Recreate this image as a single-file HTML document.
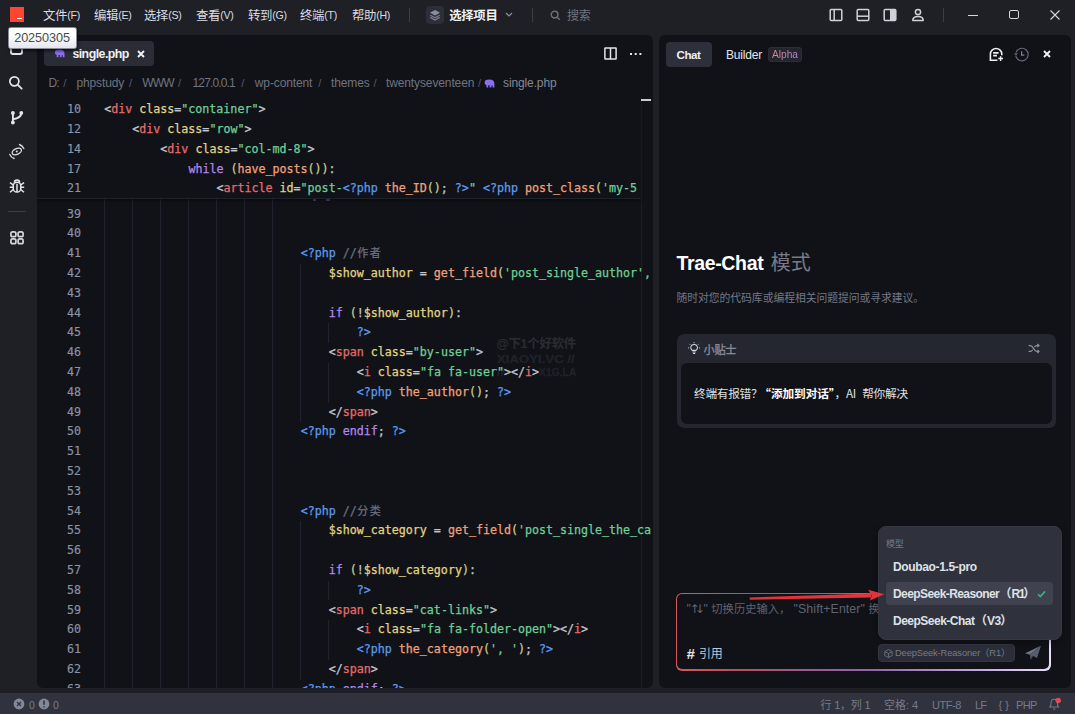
<!DOCTYPE html>
<html lang="zh-CN">
<head>
<meta charset="utf-8">
<title>Trae</title>
<style>
*{box-sizing:border-box;margin:0;padding:0}
html,body{width:1075px;height:714px;overflow:hidden;background:#1f2026}
body{position:relative;font-family:"Liberation Sans","Noto Sans CJK SC",sans-serif;color:#d5d8e0;font-size:12px}
.abs{position:absolute}
svg{position:absolute;overflow:visible}
/* title bar */
.menu{position:absolute;top:7.5px;height:16px;line-height:16px;font-size:12.4px;color:#d9dce3;white-space:nowrap;letter-spacing:-0.3px}
.menu small{font-size:10.6px;letter-spacing:-0.25px;position:relative;top:-0.4px}
.vsep{position:absolute;width:1px;background:#3a3c47}
/* panels */
.panel{position:absolute;background:#111217;border-radius:6px;overflow:hidden}
/* editor */
.tab{position:absolute;left:44px;top:41.3px;width:109.5px;height:24.4px;background:#2a2c36;border-radius:4px}
.crumb{position:absolute;top:75.5px;height:14px;line-height:14px;font-size:12px;color:#6f7380;white-space:nowrap;letter-spacing:-0.12px}
.sl{color:#575a66;font-size:11px}
.ln,.cl{position:absolute;font-family:"DejaVu Sans Mono","Liberation Mono","Noto Sans CJK SC",monospace;font-size:11.7px;height:19.79px;line-height:19.79px;white-space:pre;letter-spacing:-0.0280px}
.ln{left:37px;width:44px;text-align:right;color:#8d93a3}
.cl{color:#c3c7d1;-webkit-text-stroke:0.25px}
.ln{-webkit-text-stroke:0.15px}
.cj{font-size:11px;letter-spacing:1.3px;margin-left:0.6px}
.g{position:absolute;width:1px;background:#20232e}
.wm2{-webkit-text-stroke:0.4px;font-size:11px;font-weight:bold;color:#20222a;line-height:12px;white-space:nowrap;transform:scaleX(1.2);transform-origin:0 0}
.ph .la{font-size:12.3px}
.ph .ar{font-family:"DejaVu Sans",sans-serif;font-size:12px;letter-spacing:-4.6px;margin:0 3.2px 0 -1.6px;position:relative;top:-0.5px}
.fp{margin-left:-0.6px}
.fp.l{margin-left:0.4px;margin-right:0.6px}
.p{color:#c3c7d1}
.t{color:#e66c6c}
.a{color:#e0d585}
.s{color:#6fcf97}
.b{color:#5b9cf0}
.k{color:#b088f0}
.f{color:#f0a27c}
.c{color:#6c7080}
.y{color:#c9cf8c}
.w{color:#c3c7d1}
/* chat */
.muted{color:#747886}
.st{position:absolute;top:698px;height:14px;line-height:14px;font-size:11px;color:#777b89;white-space:nowrap}
.mi{position:absolute;left:893px;height:16px;line-height:16px;font-size:12px;font-weight:bold;color:#dfe1e8;white-space:nowrap;letter-spacing:-0.35px}
</style>
</head>
<body>

<!-- ================= TITLE BAR ================= -->
<div class="abs" style="left:9.7px;top:7.4px;width:14.4px;height:14.7px;background:#fd4531"></div>
<div class="abs" style="left:16.8px;top:17.7px;width:5.2px;height:1.8px;background:#fff"></div>

<div class="menu" style="left:43px">文件<small>(F)</small></div>
<div class="menu" style="left:94px">编辑<small>(E)</small></div>
<div class="menu" style="left:144px">选择<small>(S)</small></div>
<div class="menu" style="left:196px">查看<small>(V)</small></div>
<div class="menu" style="left:248px">转到<small>(G)</small></div>
<div class="menu" style="left:300px">终端<small>(T)</small></div>
<div class="menu" style="left:352px">帮助<small>(H)</small></div>
<div class="vsep" style="left:409px;top:8px;height:14px"></div>

<div class="abs" style="left:426px;top:6px;width:18px;height:18px;border-radius:4px;background:#2c2e39"></div>
<svg style="left:429px;top:9px" width="12" height="12" viewBox="0 0 12 12"><path d="M6 1 L11 3.8 L6 6.6 L1 3.8 Z" fill="#8a8e9b"/><path d="M1.3 6.2 L6 8.8 L10.7 6.2 M1.3 8.4 L6 11 L10.7 8.4" fill="none" stroke="#7a7e8b" stroke-width="1.3"/></svg>
<div class="menu" style="left:449.2px;font-weight:bold;color:#f0f1f4;letter-spacing:-0.3px">选择项目</div>
<svg style="left:505px;top:12px" width="8" height="6" viewBox="0 0 8 6"><path d="M1 1 L4 4 L7 1" fill="none" stroke="#8b8f9c" stroke-width="1.2"/></svg>
<div class="vsep" style="left:531.6px;top:8px;height:14px"></div>
<svg style="left:550px;top:10px" width="11" height="11" viewBox="0 0 11 11"><circle cx="4.6" cy="4.6" r="3.4" fill="none" stroke="#6f7380" stroke-width="1.3"/><path d="M7.2 7.2 L9.8 9.8" stroke="#6f7380" stroke-width="1.3"/></svg>
<div class="menu" style="left:567px;color:#6f7380;font-size:12px">搜索</div>

<!-- window / layout icons -->
<svg style="left:828.7px;top:8px" width="14" height="14" viewBox="0 0 14 14"><rect x="1.2" y="1.6" width="11.6" height="10.8" rx="1" fill="none" stroke="#cfd2da" stroke-width="1.5"/><path d="M5.2 1.6 V12.4" stroke="#cfd2da" stroke-width="1.5"/></svg>
<svg style="left:855.7px;top:8px" width="14" height="14" viewBox="0 0 14 14"><rect x="1.2" y="1.6" width="11.6" height="10.8" rx="1" fill="none" stroke="#cfd2da" stroke-width="1.5"/><path d="M1.2 8.2 H12.8" stroke="#cfd2da" stroke-width="1.5"/></svg>
<svg style="left:882.7px;top:8px" width="14" height="14" viewBox="0 0 14 14"><rect x="1.2" y="1.6" width="11.6" height="10.8" rx="1" fill="none" stroke="#cfd2da" stroke-width="1.5"/><rect x="7" y="1.6" width="5.8" height="10.8" fill="#cfd2da"/></svg>
<svg style="left:910.7px;top:8px" width="14" height="14" viewBox="0 0 14 14"><circle cx="7" cy="4" r="2.6" fill="none" stroke="#cfd2da" stroke-width="1.5"/><path d="M1.8 12.4 C1.8 9.6 4 8.6 7 8.6 C10 8.6 12.2 9.6 12.2 12.4 Z" fill="none" stroke="#cfd2da" stroke-width="1.5" stroke-linejoin="round"/></svg>
<div class="vsep" style="left:943px;top:8px;height:14px"></div>
<div class="abs" style="left:967.6px;top:15px;width:10.2px;height:1px;background:#d5d8e0"></div>
<div class="abs" style="left:1009.2px;top:10px;width:9.4px;height:9.4px;border:1.1px solid #d5d8e0;border-radius:2px"></div>
<svg style="left:1050.4px;top:10px" width="10" height="10" viewBox="0 0 10 10"><path d="M0.5 0.5 L9.5 9.5 M9.5 0.5 L0.5 9.5" stroke="#d5d8e0" stroke-width="1.1"/></svg>

<!-- ================= ACTIVITY BAR ================= -->
<div class="abs" style="left:10px;top:41px;width:13.2px;height:14.2px;border:2px solid #e3e5ea;border-radius:3px"></div>
<svg style="left:8.4px;top:75.2px" width="15.4" height="15.4" viewBox="0 0 16 16"><circle cx="6.6" cy="6.6" r="4.7" fill="none" stroke="#e3e5ea" stroke-width="1.8"/><path d="M10.2 10.2 L14.2 14.2" stroke="#e3e5ea" stroke-width="1.9" stroke-linecap="round"/></svg>
<svg style="left:0px;top:100px" width="37" height="100" viewBox="0 0 37 100">
<g fill="none" stroke="#e3e5ea">
<!-- branch -->
<path d="M12.9 13 V22.4 M12.9 19.3 C17 18.6 21.3 17.6 21.3 13" stroke-width="1.9"/>
<circle cx="12.9" cy="12.9" r="1.9" fill="#e3e5ea" stroke="none"/><circle cx="12.9" cy="22.5" r="1.9" fill="#e3e5ea" stroke="none"/><circle cx="21.3" cy="12.9" r="1.9" fill="#e3e5ea" stroke="none"/>
<!-- eye -->
<g transform="translate(16.8 51.5)" stroke="#d9dce3" stroke-width="1.35" stroke-linecap="round">
<ellipse cx="0" cy="0" rx="4.9" ry="2.9" transform="rotate(-24)"/>
<circle cx="0" cy="0" r="1" fill="#d9dce3" stroke="none"/>
<path d="M2.7 -7 A7.5 7.5 0 0 1 7 -2.9"/>
<path d="M-2.7 7 A7.5 7.5 0 0 1 -7 2.9"/>
</g>
<!-- bug -->
<g transform="translate(9 77.5) scale(1 0.94)" stroke-width="1.5">
<rect x="4.3" y="5" width="7.4" height="10.4" rx="3.5"/>
<path d="M5.4 5.2 C5.4 1.8 10.6 1.8 10.6 5.2"/>
<path d="M8 6.6 V15.4"/>
<path d="M4.3 8 L1 5.4 M4.3 10.4 H0.8 M4.3 12.8 L1 15.6 M11.7 8 L15 5.4 M11.7 10.4 H15.2 M11.7 12.8 L15 15.6"/>
</g>
</g></svg>
<div class="abs" style="left:8px;top:211px;width:18px;height:1px;background:#3a3c47"></div>
<svg style="left:10px;top:230.7px" width="14" height="13.6" viewBox="0 0 14 13.6"><g fill="none" stroke="#d3d6de" stroke-width="1.7"><rect x="0.9" y="0.9" width="5" height="4.8" rx="1.8"/><rect x="8.1" y="0.9" width="5" height="4.8" rx="1.8"/><rect x="0.9" y="7.9" width="5" height="4.8" rx="1.8"/><rect x="8.1" y="7.9" width="5" height="4.8" rx="1.8"/></g></svg>

<!-- ================= EDITOR PANEL ================= -->
<div class="panel" style="left:37px;top:34.5px;width:616px;height:653px"></div>
<div class="tab"></div>
<svg style="left:54.3px;top:49.2px" width="11.4" height="8.8" viewBox="0 0 11 9"><path d="M0.6 3.4 C0.6 1 2.6 0.4 5.2 0.4 C8.6 0.4 10.4 1.6 10.4 4.4 V8.4 H8.6 V6.4 H7.4 V8.4 H5.6 V6.2 H4.2 V8.4 H2.4 V6 C1.2 5.6 0.6 4.8 0.6 3.4 Z" fill="#8b6ff0"/></svg>
<div class="abs" style="left:72.4px;top:46px;height:16px;line-height:16px;font-size:12.4px;font-weight:bold;color:#f0f1f4;letter-spacing:-0.55px">single.php</div>
<svg style="left:136.5px;top:49.5px" width="8" height="8" viewBox="0 0 8 8"><path d="M1 1 L7 7 M7 1 L1 7" stroke="#f0f1f4" stroke-width="1.9"/></svg>
<svg style="left:604.3px;top:47px" width="13" height="13" viewBox="0 0 13 13"><rect x="0.9" y="0.9" width="11.2" height="11.2" rx="0.4" fill="none" stroke="#e3e5ea" stroke-width="1.5"/><path d="M6.5 0.9 V12.1" stroke="#e3e5ea" stroke-width="1.5"/></svg>
<div class="abs" style="left:630.4px;top:52.6px;width:2.1px;height:2.1px;background:#e3e5ea;box-shadow:4.7px 0 #e3e5ea,9.4px 0 #e3e5ea"></div>

<!-- breadcrumbs -->
<div class="crumb" style="left:48.6px;letter-spacing:-0.9px">D:</div><div class="crumb sl" style="left:63.3px">/</div>
<div class="crumb" style="left:76.4px">phpstudy</div><div class="crumb sl" style="left:129.0px">/</div>
<div class="crumb" style="left:142.2px;letter-spacing:-0.75px">WWW</div><div class="crumb sl" style="left:178.0px">/</div>
<div class="crumb" style="left:192.5px;letter-spacing:-0.85px">127.0.0.1</div><div class="crumb sl" style="left:241.3px">/</div>
<div class="crumb" style="left:254.8px">wp-content</div><div class="crumb sl" style="left:318.3px">/</div>
<div class="crumb" style="left:331.0px">themes</div><div class="crumb sl" style="left:373.4px">/</div>
<div class="crumb" style="left:386.0px">twentyseventeen</div><div class="crumb sl" style="left:478.0px">/</div>
<svg style="left:484px;top:79px" width="11" height="9" viewBox="0 0 11 9"><path d="M0.6 3.4 C0.6 1 2.6 0.4 5.2 0.4 C8.6 0.4 10.4 1.6 10.4 4.4 V8.4 H8.6 V6.4 H7.4 V8.4 H5.6 V6.2 H4.2 V8.4 H2.4 V6 C1.2 5.6 0.6 4.8 0.6 3.4 Z" fill="#8b6ff0"/></svg>
<div class="crumb" style="left:503px;color:#858996">single.php</div>

<!-- code area -->
<div class="abs" style="left:37px;top:98.2px;width:604px;height:1.6px;background:#1a1d27"></div>
<div class="abs" style="left:37px;top:97px;width:616px;height:591px;overflow:hidden;border-radius:0 0 6px 6px">
 <div class="abs" style="left:-37px;top:-97px;width:1075px;height:714px">
  <!-- watermark -->
  <div class="abs" style="left:496.5px;top:335.5px;font-size:12.4px;font-weight:bold;color:#2a2c35;line-height:16px;white-space:nowrap;letter-spacing:-0.2px">@下1个好软件</div>
  <div class="abs wm2" style="left:496.5px;top:353px">XIAOYI.VC //</div>
  <div class="abs wm2" style="left:496.5px;top:365.7px">//</div>
  <div class="abs wm2" style="left:539px;top:365.7px;transform:scaleX(.94)">X1G.LA</div>
  <div class="abs" style="left:641px;top:97px;width:1px;height:591px;background:#1c1d24"></div>
<i class="g" style="left:103.7px;top:199px;height:489px"></i>
<i class="g" style="left:131.8px;top:199px;height:489px"></i>
<i class="g" style="left:159.8px;top:199px;height:489px"></i>
<i class="g" style="left:187.9px;top:199px;height:489px"></i>
<i class="g" style="left:216.0px;top:199px;height:489px"></i>
<i class="g" style="left:244.0px;top:199px;height:489px"></i>
<i class="g" style="left:272.1px;top:199px;height:489px"></i>
<i class="g" style="left:300.1px;top:264.1px;height:158.3px"></i>
<i class="g" style="left:328.2px;top:323.4px;height:19.8px"></i>
<i class="g" style="left:328.2px;top:363.0px;height:39.6px"></i>
<i class="g" style="left:300.1px;top:521.3px;height:158.3px"></i>
<i class="g" style="left:328.2px;top:580.7px;height:19.8px"></i>
<i class="g" style="left:328.2px;top:620.3px;height:39.6px"></i>
<div class="ln" style="top:204.70px">39</div>
<div class="ln" style="top:224.49px">40</div>
<div class="ln" style="top:244.28px">41</div>
<div class="cl" style="top:244.28px;left:300.65px"><span class="b">&lt;?php</span><span class="w"> </span><span class="c">//</span><span class="c cj">作者</span></div>
<div class="ln" style="top:264.07px">42</div>
<div class="cl" style="top:264.07px;left:328.71px"><span class="a">$show_author</span><span class="w"> </span><span class="p">=</span><span class="w"> </span><span class="f">get_field</span><span class="y">(</span><span class="s">'post_single_author',</span></div>
<div class="ln" style="top:283.86px">43</div>
<div class="ln" style="top:303.65px">44</div>
<div class="cl" style="top:303.65px;left:328.71px"><span class="k">if</span><span class="w"> </span><span class="y">(</span><span class="p">!</span><span class="a">$show_author</span><span class="y">)</span><span class="p">:</span></div>
<div class="ln" style="top:323.44px">45</div>
<div class="cl" style="top:323.44px;left:356.78px"><span class="b">?&gt;</span></div>
<div class="ln" style="top:343.23px">46</div>
<div class="cl" style="top:343.23px;left:328.71px"><span class="p">&lt;</span><span class="t">span</span><span class="w"> </span><span class="a">class</span><span class="p">=</span><span class="s">"by-user"</span><span class="p">&gt;</span></div>
<div class="ln" style="top:363.02px">47</div>
<div class="cl" style="top:363.02px;left:356.78px"><span class="p">&lt;</span><span class="t">i</span><span class="w"> </span><span class="a">class</span><span class="p">=</span><span class="s">"fa fa-user"</span><span class="p">&gt;</span><span class="p">&lt;/</span><span class="t">i</span><span class="p">&gt;</span></div>
<div class="ln" style="top:382.81px">48</div>
<div class="cl" style="top:382.81px;left:356.78px"><span class="b">&lt;?php</span><span class="w"> </span><span class="f">the_author</span><span class="y">(</span><span class="y">)</span><span class="p">;</span><span class="w"> </span><span class="b">?&gt;</span></div>
<div class="ln" style="top:402.60px">49</div>
<div class="cl" style="top:402.60px;left:328.71px"><span class="p">&lt;/</span><span class="t">span</span><span class="p">&gt;</span></div>
<div class="ln" style="top:422.39px">50</div>
<div class="cl" style="top:422.39px;left:300.65px"><span class="b">&lt;?php</span><span class="w"> </span><span class="k">endif</span><span class="p">;</span><span class="w"> </span><span class="b">?&gt;</span></div>
<div class="ln" style="top:442.18px">51</div>
<div class="ln" style="top:461.97px">52</div>
<div class="ln" style="top:481.76px">53</div>
<div class="ln" style="top:501.55px">54</div>
<div class="cl" style="top:501.55px;left:300.65px"><span class="b">&lt;?php</span><span class="w"> </span><span class="c">//</span><span class="c cj">分类</span></div>
<div class="ln" style="top:521.34px">55</div>
<div class="cl" style="top:521.34px;left:328.71px"><span class="a">$show_category</span><span class="w"> </span><span class="p">=</span><span class="w"> </span><span class="f">get_field</span><span class="y">(</span><span class="s">'post_single_the_ca</span></div>
<div class="ln" style="top:541.13px">56</div>
<div class="ln" style="top:560.92px">57</div>
<div class="cl" style="top:560.92px;left:328.71px"><span class="k">if</span><span class="w"> </span><span class="y">(</span><span class="p">!</span><span class="a">$show_category</span><span class="y">)</span><span class="p">:</span></div>
<div class="ln" style="top:580.71px">58</div>
<div class="cl" style="top:580.71px;left:356.78px"><span class="b">?&gt;</span></div>
<div class="ln" style="top:600.50px">59</div>
<div class="cl" style="top:600.50px;left:328.71px"><span class="p">&lt;</span><span class="t">span</span><span class="w"> </span><span class="a">class</span><span class="p">=</span><span class="s">"cat-links"</span><span class="p">&gt;</span></div>
<div class="ln" style="top:620.29px">60</div>
<div class="cl" style="top:620.29px;left:356.78px"><span class="p">&lt;</span><span class="t">i</span><span class="w"> </span><span class="a">class</span><span class="p">=</span><span class="s">"fa fa-folder-open"</span><span class="p">&gt;</span><span class="p">&lt;/</span><span class="t">i</span><span class="p">&gt;</span></div>
<div class="ln" style="top:640.08px">61</div>
<div class="cl" style="top:640.08px;left:356.78px"><span class="b">&lt;?php</span><span class="w"> </span><span class="f">the_category</span><span class="y">(</span><span class="s">', '</span><span class="y">)</span><span class="p">;</span><span class="w"> </span><span class="b">?&gt;</span></div>
<div class="ln" style="top:659.87px">62</div>
<div class="cl" style="top:659.87px;left:328.71px"><span class="p">&lt;/</span><span class="t">span</span><span class="p">&gt;</span></div>
<div class="ln" style="top:679.66px">63</div>
<div class="cl" style="top:679.66px;left:300.65px"><span class="b">&lt;?php</span><span class="w"> </span><span class="k">endif</span><span class="p">;</span><span class="w"> </span><span class="b">?&gt;</span></div>
  <!-- sliver of clipped line above 39 -->
  <div class="abs" style="left:313px;top:199px;width:3px;height:2px;background:#5b9cf0;opacity:.4"></div>
  <div class="abs" style="left:326px;top:199px;width:4px;height:2px;background:#5b9cf0;opacity:.4"></div>
  <!-- sticky scroll -->
  <div class="abs" style="left:37px;top:97px;width:604px;height:101.5px;background:#111217;border-bottom:1px solid #1f212a;box-shadow:0 2px 3px rgba(0,0,0,.35)"></div>
<div class="ln" style="top:100.20px">10</div>
<div class="cl" style="top:100.20px;left:104.20px"><span class="p">&lt;</span><span class="t">div</span><span class="w"> </span><span class="a">class</span><span class="p">=</span><span class="s">"container"</span><span class="p">&gt;</span></div>
<div class="ln" style="top:119.99px">12</div>
<div class="cl" style="top:119.99px;left:132.26px"><span class="p">&lt;</span><span class="t">div</span><span class="w"> </span><span class="a">class</span><span class="p">=</span><span class="s">"row"</span><span class="p">&gt;</span></div>
<div class="ln" style="top:139.78px">14</div>
<div class="cl" style="top:139.78px;left:160.33px"><span class="p">&lt;</span><span class="t">div</span><span class="w"> </span><span class="a">class</span><span class="p">=</span><span class="s">"col-md-8"</span><span class="p">&gt;</span></div>
<div class="ln" style="top:159.57px">17</div>
<div class="cl" style="top:159.57px;left:188.39px"><span class="k">while</span><span class="w"> </span><span class="y">(</span><span class="f">have_posts</span><span class="y">())</span><span class="p">:</span></div>
<div class="ln" style="top:179.36px">21</div>
<div class="cl" style="top:179.36px;left:216.46px"><span class="p">&lt;</span><span class="t">article</span><span class="w"> </span><span class="a">id</span><span class="p">=</span><span class="s">"post-</span><span class="b">&lt;?php</span><span class="w"> </span><span class="f">the_ID</span><span class="y">()</span><span class="p">;</span><span class="w"> </span><span class="b">?&gt;</span><span class="s">"</span><span class="w"> </span><span class="b">&lt;?php</span><span class="w"> </span><span class="f">post_class</span><span class="y">(</span><span class="s">'my-5</span></div>
  <!-- scrollbar / minimap edge -->
  <div class="abs" style="left:641px;top:99px;width:10px;height:2px;background:#c9ccd6"></div>
 </div>
</div>

<!-- ================= CHAT PANEL ================= -->
<div class="panel" style="left:658.5px;top:34.5px;width:412.3px;height:653px"></div>
<div class="abs" style="left:666px;top:42px;width:46px;height:25px;border-radius:4px;background:#2d2f3a"></div>
<div class="abs" style="left:676.5px;top:46.5px;height:16px;line-height:16px;font-size:11.6px;font-weight:bold;color:#eceef2;letter-spacing:-0.45px">Chat</div>
<div class="abs" style="left:726px;top:46.5px;height:16px;line-height:16px;font-size:12px;color:#e3e5ea;letter-spacing:-0.2px">Builder</div>
<div class="abs" style="left:768px;top:47px;width:34px;height:15px;border-radius:3px;background:#25252f;border:1px solid #2d2d39;font-size:10.2px;line-height:13px;text-align:center"><span style="background:linear-gradient(90deg,#e0848c,#b48bd6);-webkit-background-clip:text;background-clip:text;color:transparent">Alpha</span></div>
<!-- chat header icons -->
<svg style="left:988.6px;top:47px" width="15" height="15" viewBox="0 0 15 15"><path d="M8.4 13.2 H1.4 V7.2 A5.7 5.7 0 0 1 12.8 7.2 V8.2" fill="none" stroke="#eceef2" stroke-width="1.6"/><path d="M4.2 5.8 H9.6 M4.2 8.6 H8" stroke="#eceef2" stroke-width="1.7"/><path d="M11.6 9.2 V14 M9.2 11.6 H14" stroke="#eceef2" stroke-width="1.5"/></svg>
<svg style="left:1014px;top:47px" width="16" height="16" viewBox="0 0 16 16"><path d="M2 5.4 A6.3 6.3 0 1 1 1.7 8.6" fill="none" stroke="#676b79" stroke-width="1.15"/><path d="M0.6 6.2 L2 7.6 L3.4 6.2" fill="none" stroke="#676b79" stroke-width="1.1"/><path d="M7.6 4.2 V8.2 H10.4" fill="none" stroke="#7d8190" stroke-width="1.2"/></svg>
<svg style="left:1042.6px;top:50.3px" width="8" height="8" viewBox="0 0 8 8"><path d="M1 1 L7 7 M7 1 L1 7" stroke="#f0f1f4" stroke-width="1.9"/></svg>

<div class="abs" style="left:676.5px;top:249px;height:28px;line-height:28px;font-size:19.5px;font-weight:bold;color:#fff;white-space:nowrap;letter-spacing:-0.35px">Trae-Chat <span style="font-weight:normal;color:#777b89;font-size:20px;letter-spacing:0;margin-left:2.3px">模式</span></div>
<div class="abs muted" style="left:676.5px;top:290px;height:16px;line-height:16px;font-size:10.8px;white-space:nowrap;letter-spacing:-0.03px">随时对您的代码库或编程相关问题提问或寻求建议。</div>

<!-- tips card -->
<div class="abs" style="left:677px;top:333.8px;width:379px;height:94.2px;border-radius:7px;background:#252730"></div>
<svg style="left:688px;top:341.6px" width="12.2" height="12.2" viewBox="0 0 14 14"><g fill="none" stroke="#d5d8e0" stroke-width="1.2"><path d="M4.8 9.6 C3.6 8.8 3.2 7.8 3.2 6.6 A3.8 3.8 0 0 1 10.8 6.6 C10.8 7.8 10.4 8.8 9.2 9.6 Z"/><path d="M5.2 11.6 H8.8 M5.8 13.2 H8.2"/><path d="M7 0.2 V1.4 M1.6 2.2 L2.4 3 M12.4 2.2 L11.6 3 M0.2 6.8 H1.4 M12.6 6.8 H13.8" stroke-width="1.1"/></g></svg>
<div class="abs" style="left:703.6px;top:341.8px;height:16px;line-height:16px;font-size:11.2px;color:#8b8f9c;letter-spacing:-0.3px;-webkit-text-stroke:0.3px">小贴士</div>
<svg style="left:1028px;top:343px" width="12" height="11" viewBox="0 0 12 11"><g fill="none" stroke="#8b8f9c" stroke-width="1.2"><path d="M0.6 2.6 H2.6 C5 2.6 6 8.4 8.6 8.4 H10.8"/><path d="M0.6 8.4 H2.6 C3.6 8.4 4.2 7.6 4.7 6.8 M6.4 4.2 C7 3.2 7.6 2.6 8.6 2.6 H10.8"/><path d="M9.4 1 L11 2.6 L9.4 4.2 M9.4 6.8 L11 8.4 L9.4 10"/></g></svg>
<div class="abs" style="left:681px;top:363px;width:371px;height:61px;border-radius:6px;background:#111217"></div>
<div class="abs" style="left:694px;top:384.5px;height:16px;line-height:16px;font-size:11.7px;color:#dfe1e7;white-space:nowrap;letter-spacing:-0.3px;word-spacing:4px;font-family:'Noto Sans CJK SC','Liberation Sans',sans-serif">终端有报错？<b style="color:#fff;letter-spacing:-0.1px;margin-left:-3px">“添加到对话”</b>，AI 帮你解决</div>

<!-- input box -->
<div class="abs" style="left:676px;top:593px;width:374.5px;height:77.5px;border-radius:6px;background:linear-gradient(97deg,#d8595f 0%,#bb505b 17%,#a0568a 34%,#9266ae 54%,#c4a8e6 82%,#e9defa 100%)"></div>
<div class="abs" style="left:677.1px;top:594.1px;width:372.3px;height:75.3px;border-radius:5px;background:#111217"></div>
<div class="abs ph" style="left:686.6px;top:601px;width:300px;overflow:hidden;height:17px;line-height:17px;font-size:11.3px;color:#5f6371;white-space:nowrap"><span class="la">"</span><span class="ar">↑↓</span><span class="la">" </span>切换历史输入，<span class="la" style="margin-left:3.2px;letter-spacing:0.12px">"Shift+Enter" </span>换行</div>
<div class="abs" style="left:686.8px;top:645.5px;height:16px;line-height:16px;font-size:12px;color:#c3c7d1;white-space:nowrap"><b style="font-size:14.5px;color:#e3e5ea;position:relative;top:0.5px">#</b><span style="margin-left:4px;letter-spacing:-0.2px;position:relative;top:-0.3px">引用</span></div>
<div class="abs" style="left:878px;top:644px;width:137px;height:18px;border-radius:4px;background:#2b2d38;border:1px solid #343644"></div>
<svg style="left:884px;top:648.5px" width="9" height="9" viewBox="0 0 9 9"><path d="M4.5 0.6 L8.2 2.6 V6.6 L4.5 8.5 L0.8 6.6 V2.6 Z M0.8 2.6 L4.5 4.6 L8.2 2.6 M4.5 4.6 V8.5" fill="none" stroke="#6b6f7d" stroke-width="0.9"/></svg>
<div class="abs" style="left:895px;top:646px;height:14px;line-height:14px;font-size:9.3px;color:#777b89;white-space:nowrap;letter-spacing:-0.1px">DeepSeek-Reasoner（R1）</div>
<svg style="left:1024px;top:645px" width="18" height="16" viewBox="0 0 18 16"><path d="M17 0.8 L1 8.2 L6 9.8 Z" fill="#6f7484"/><path d="M17 0.8 L6 9.8 L6.6 14.6 L9.2 11 L13 13 Z" fill="#585d6c"/><path d="M6.6 14.6 L8 10.4 L9.2 11 Z" fill="#3d414d"/></svg>

<!-- model dropdown -->
<div class="abs" style="left:878px;top:526px;width:184px;height:114px;border-radius:8px;background:#2f323c;border:1px solid #363944;box-shadow:0 2px 6px rgba(0,0,0,.3)"></div>
<div class="abs" style="left:886px;top:537.5px;height:12px;line-height:12px;font-size:9px;color:#737786;letter-spacing:-0.2px">模型</div>
<div class="abs" style="left:886px;top:582px;width:167px;height:23px;border-radius:4px;background:#40424f"></div>
<div class="mi" style="top:559px">Doubao-1.5-pro</div>
<div class="mi" style="top:586px;letter-spacing:-0.58px">DeepSeek-Reasoner<span class="fp l">（</span><span style="letter-spacing:-1.5px">R1</span><span class="fp">）</span></div>
<div class="mi" style="top:613px;letter-spacing:-0.5px">DeepSeek-Chat<span class="fp l">（</span>V3<span class="fp">）</span></div>
<svg style="left:1037px;top:590px" width="9" height="8" viewBox="0 0 9 8"><path d="M1 4.2 L3.4 6.6 L8 1.4" fill="none" stroke="#2fb887" stroke-width="1.6"/></svg>
<!-- red arrow -->
<svg style="left:745px;top:585px" width="145" height="20" viewBox="0 0 145 20"><path d="M4.7 12.4 L126 8.5 L126 12.5 L4.7 14.7 Z" fill="#e2343c"/><path d="M139.2 9.3 L123.2 4.7 L126.6 10.4 L125 15.5 Z" fill="#e2343c"/></svg>

<!-- ================= STATUS BAR ================= -->
<div class="abs" style="left:0;top:692.5px;width:1075px;height:21.5px;background:#30323e"></div>
<svg style="left:13.4px;top:698px" width="12" height="12" viewBox="0 0 12 12"><circle cx="6" cy="6" r="5.4" fill="#858997"/><path d="M4 4 L8 8 M8 4 L4 8" stroke="#30323e" stroke-width="1.3"/></svg>
<div class="st" style="left:29px;font-size:10.5px;top:697.6px">0</div>
<svg style="left:37.5px;top:698px" width="12" height="12" viewBox="0 0 12 12"><circle cx="6" cy="6" r="5.4" fill="#858997"/><path d="M6 2.6 V6.8 M6 8.2 V9.6" stroke="#2b2d38" stroke-width="1.5"/></svg>
<div class="st" style="left:53px;font-size:10.5px;top:697.6px">0</div>
<div class="st" style="left:820.5px;letter-spacing:-0.2px">行 1，列 1</div>
<div class="st" style="left:884px">空格: 4</div>
<div class="st" style="left:932px;letter-spacing:-0.45px">UTF-8</div>
<div class="st" style="left:975px;letter-spacing:-0.9px">LF</div>
<div class="st" style="left:998.6px">{ }</div><div class="st" style="left:1016px;letter-spacing:-0.7px">PHP</div>
<svg style="left:1048px;top:697px" width="13" height="14" viewBox="0 0 13 14"><path d="M2 10 C3 9 3 8 3 6 C3 3.6 4.4 2.2 6.2 2.2 C8 2.2 9.4 3.6 9.4 6 C9.4 8 9.4 9 10.4 10 Z M5 12 H7.4" fill="none" stroke="#757988" stroke-width="1.1"/><circle cx="10.2" cy="3.5" r="2.7" fill="#dc4c55"/></svg>

<!-- tooltip -->
<div class="abs" style="left:8.4px;top:27.4px;width:68.6px;height:21.6px;border-radius:2.5px;background:linear-gradient(#ffffff 0%,#ffffff 35%,#e4e5f0 100%);border:1px solid #8a8c96;box-shadow:1px 2px 3px rgba(0,0,0,.6)"></div>
<div class="abs" style="left:14.2px;top:29.7px;height:16px;line-height:16px;font-size:12.7px;color:#4a4a4a;letter-spacing:-0.1px">20250305</div>

</body>
</html>
